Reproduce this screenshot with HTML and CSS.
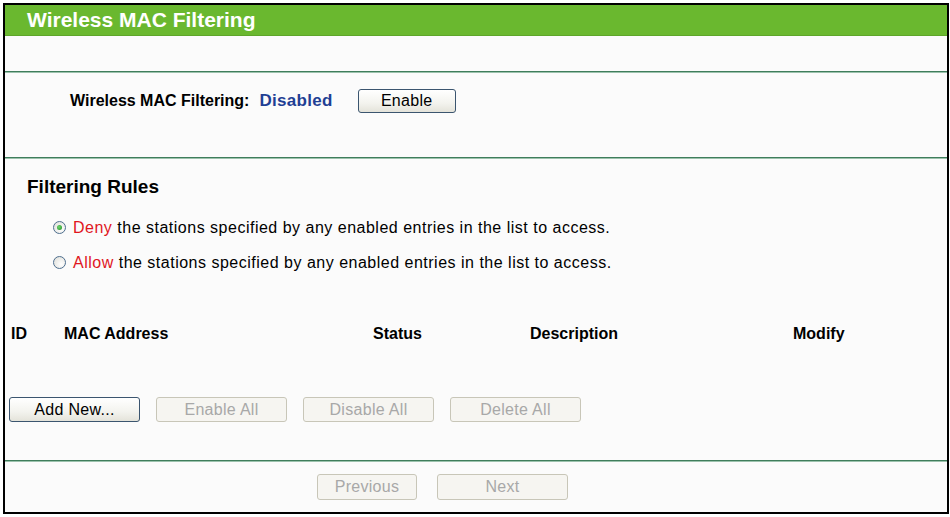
FILE: index.html
```html
<!DOCTYPE html>
<html>
<head>
<meta charset="utf-8">
<link rel="stylesheet" href="styles.css">
</head>
<body>
<div class="frame">
  <div class="title">Wireless MAC Filtering</div>
  <div class="rule rule-top"></div>
  <div class="status-row">
    <span class="status-label">Wireless MAC Filtering:</span>
    <span class="status-value">Disabled</span>
    <button class="btn btn-enable">Enable</button>
  </div>
  <div class="rule"></div>
  <div class="rules-title">Filtering Rules</div>
  <div class="radio-row radio-first">
    <span class="radio checked"></span>
    <span class="radio-text"><span class="red">Deny</span> the stations specified by any enabled entries in the list to access.</span>
  </div>
  <div class="radio-row">
    <span class="radio"></span>
    <span class="radio-text"><span class="red">Allow</span> the stations specified by any enabled entries in the list to access.</span>
  </div>
  <div class="table-head">
    <span>ID</span>
    <span>MAC Address</span>
    <span>Status</span>
    <span>Description</span>
    <span>Modify</span>
  </div>
  <div class="actions">
    <button class="btn btn-action">Add New...</button>
    <button class="btn btn-action disabled">Enable All</button>
    <button class="btn btn-action disabled">Disable All</button>
    <button class="btn btn-action disabled">Delete All</button>
  </div>
  <div class="rule rule-bottom"></div>
  <div class="nav">
    <button class="btn btn-nav disabled">Previous</button>
    <button class="btn btn-nav disabled">Next</button>
  </div>
</div>
</body>
</html>
```
FILE: styles.css
```css
html, body {
  margin: 0;
  padding: 0;
  background: #ffffff;
}
body {
  font-family: "Liberation Sans", Arial, sans-serif;
  color: #000;
}
.frame {
  margin: 3px 0 0 3px;
  width: 942px;
  height: 507px;
  border: 2px solid #000;
  background: #fbfbfb;
  display: flex;
  flex-direction: column;
}
.title {
  height: 30px;
  line-height: 30px;
  background: #6ab82f;
  border-bottom: 1px solid #5ea52a;
  color: #fff;
  font-weight: bold;
  font-size: 21px;
  padding-left: 22px;
}
.rule {
  height: 1px;
  background: #3f7d5c;
  border-bottom: 1px solid #9cc2ad;
}
.rule-top {
  margin-top: 35px;
}
.status-row {
  display: flex;
  align-items: center;
  height: 24px;
  margin-top: 16px;
  margin-bottom: 44px;
  padding-left: 65px;
}
.status-label {
  font-weight: bold;
  font-size: 16px;
}
.status-value {
  font-weight: bold;
  font-size: 17px;
  letter-spacing: 0.3px;
  color: #1f3f94;
  margin-left: 10px;
}
.btn {
  font-family: "Liberation Sans", Arial, sans-serif;
  font-size: 16px;
  letter-spacing: 0.3px;
  color: #000;
  border: 1px solid #3b556f;
  border-radius: 3px;
  background: linear-gradient(#ffffff, #f3f3ee 60%, #e4e3da);
  padding: 0;
  height: 25px;
}
.btn-enable {
  width: 98px;
  height: 24px;
  margin-left: 25px;
}
.rules-title {
  font-size: 19px;
  font-weight: bold;
  line-height: 22px;
  margin-top: 17px;
  padding-left: 22px;
}
.radio-row {
  display: flex;
  align-items: center;
  height: 35px;
  padding-left: 48px;
  font-size: 16px;
  letter-spacing: 0.5px;
}
.radio-first {
  margin-top: 12px;
}
.radio {
  width: 11px;
  height: 11px;
  border: 1px solid #4e6e8e;
  border-radius: 50%;
  background: radial-gradient(circle at 65% 65%, #ffffff, #dcdcd6);
  position: relative;
  margin-right: 7px;
}
.radio.checked::after {
  content: "";
  position: absolute;
  left: 3px;
  top: 3px;
  width: 5px;
  height: 5px;
  border-radius: 50%;
  background: radial-gradient(circle at 40% 40%, #6fd66f, #1e8c1e);
}
.red {
  color: #e0161e;
}
.table-head {
  display: grid;
  grid-template-columns: 53px 309px 157px 263px auto;
  margin-top: 44px;
  padding-left: 6px;
  font-weight: bold;
  font-size: 16px;
  line-height: 20px;
}
.actions {
  display: flex;
  gap: 16px;
  margin-top: 53px;
  padding-left: 4px;
}
.btn-action {
  width: 131px;
}
.btn.disabled {
  color: #a8a8a8;
  border-color: #c8c6b8;
  background: #f6f5f1;
}
.rule-bottom {
  margin-top: 38px;
}
.nav {
  display: flex;
  gap: 20px;
  margin-top: 12px;
  padding-left: 312px;
}
.btn-nav {
  width: 100px;
  height: 26px;
}
.btn-nav + .btn-nav {
  width: 131px;
}
```
